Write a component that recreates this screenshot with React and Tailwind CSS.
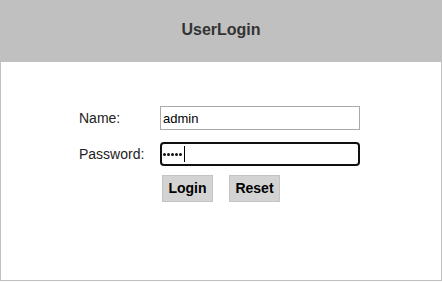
import { useState } from 'react';

export default function App() {
  const [name, setName] = useState('admin');

  return (
    <div className="w-[442px] h-[282px] bg-white font-['Liberation_Sans',Arial,sans-serif] text-[#222]">
      {/* Header */}
      <div className="h-[62px] bg-[#c0c0c0] flex items-center justify-center">
        <h1 className="text-[16px] font-bold text-[#333] mt-[-2px]">UserLogin</h1>
      </div>

      {/* Form panel */}
      <div className="h-[219px] border-x border-b border-[#c0c0c0] pt-[44px] pl-[78px]">
        <div className="flex items-center h-[24px]">
          <label className="w-[81px] text-[14px]">Name:</label>
          <input
            value={name}
            onChange={(e) => setName(e.target.value)}
            className="w-[200px] h-[24px] border border-[#a9a9a9] px-[2px] text-[13px] text-black outline-none"
          />
        </div>

        <div className="flex items-center h-[24px] mt-[12px]">
          <label className="w-[81px] text-[14px]">Password:</label>
          <div className="w-[200px] h-[24px] border-2 border-[#101010] rounded-[4px] flex items-center pl-[1px]">
            <div className="flex gap-[1px] mt-[1px]">
              <span className="w-[3px] h-[3px] rounded-full bg-[#111]" />
              <span className="w-[3px] h-[3px] rounded-full bg-[#111]" />
              <span className="w-[3px] h-[3px] rounded-full bg-[#111]" />
              <span className="w-[3px] h-[3px] rounded-full bg-[#111]" />
              <span className="w-[3px] h-[3px] rounded-full bg-[#111]" />
            </div>
            <span className="w-px h-[16px] bg-black ml-[2px]" />
          </div>
        </div>

        <div className="flex gap-[16px] mt-[9px] ml-[83px]">
          <button className="w-[51px] h-[27px] bg-[#d3d3d3] border border-[#c4c4c4] text-[14px] font-bold text-black">
            Login
          </button>
          <button className="w-[51px] h-[27px] bg-[#d3d3d3] border border-[#c4c4c4] text-[14px] font-bold text-black">
            Reset
          </button>
        </div>
      </div>
    </div>
  );
}
